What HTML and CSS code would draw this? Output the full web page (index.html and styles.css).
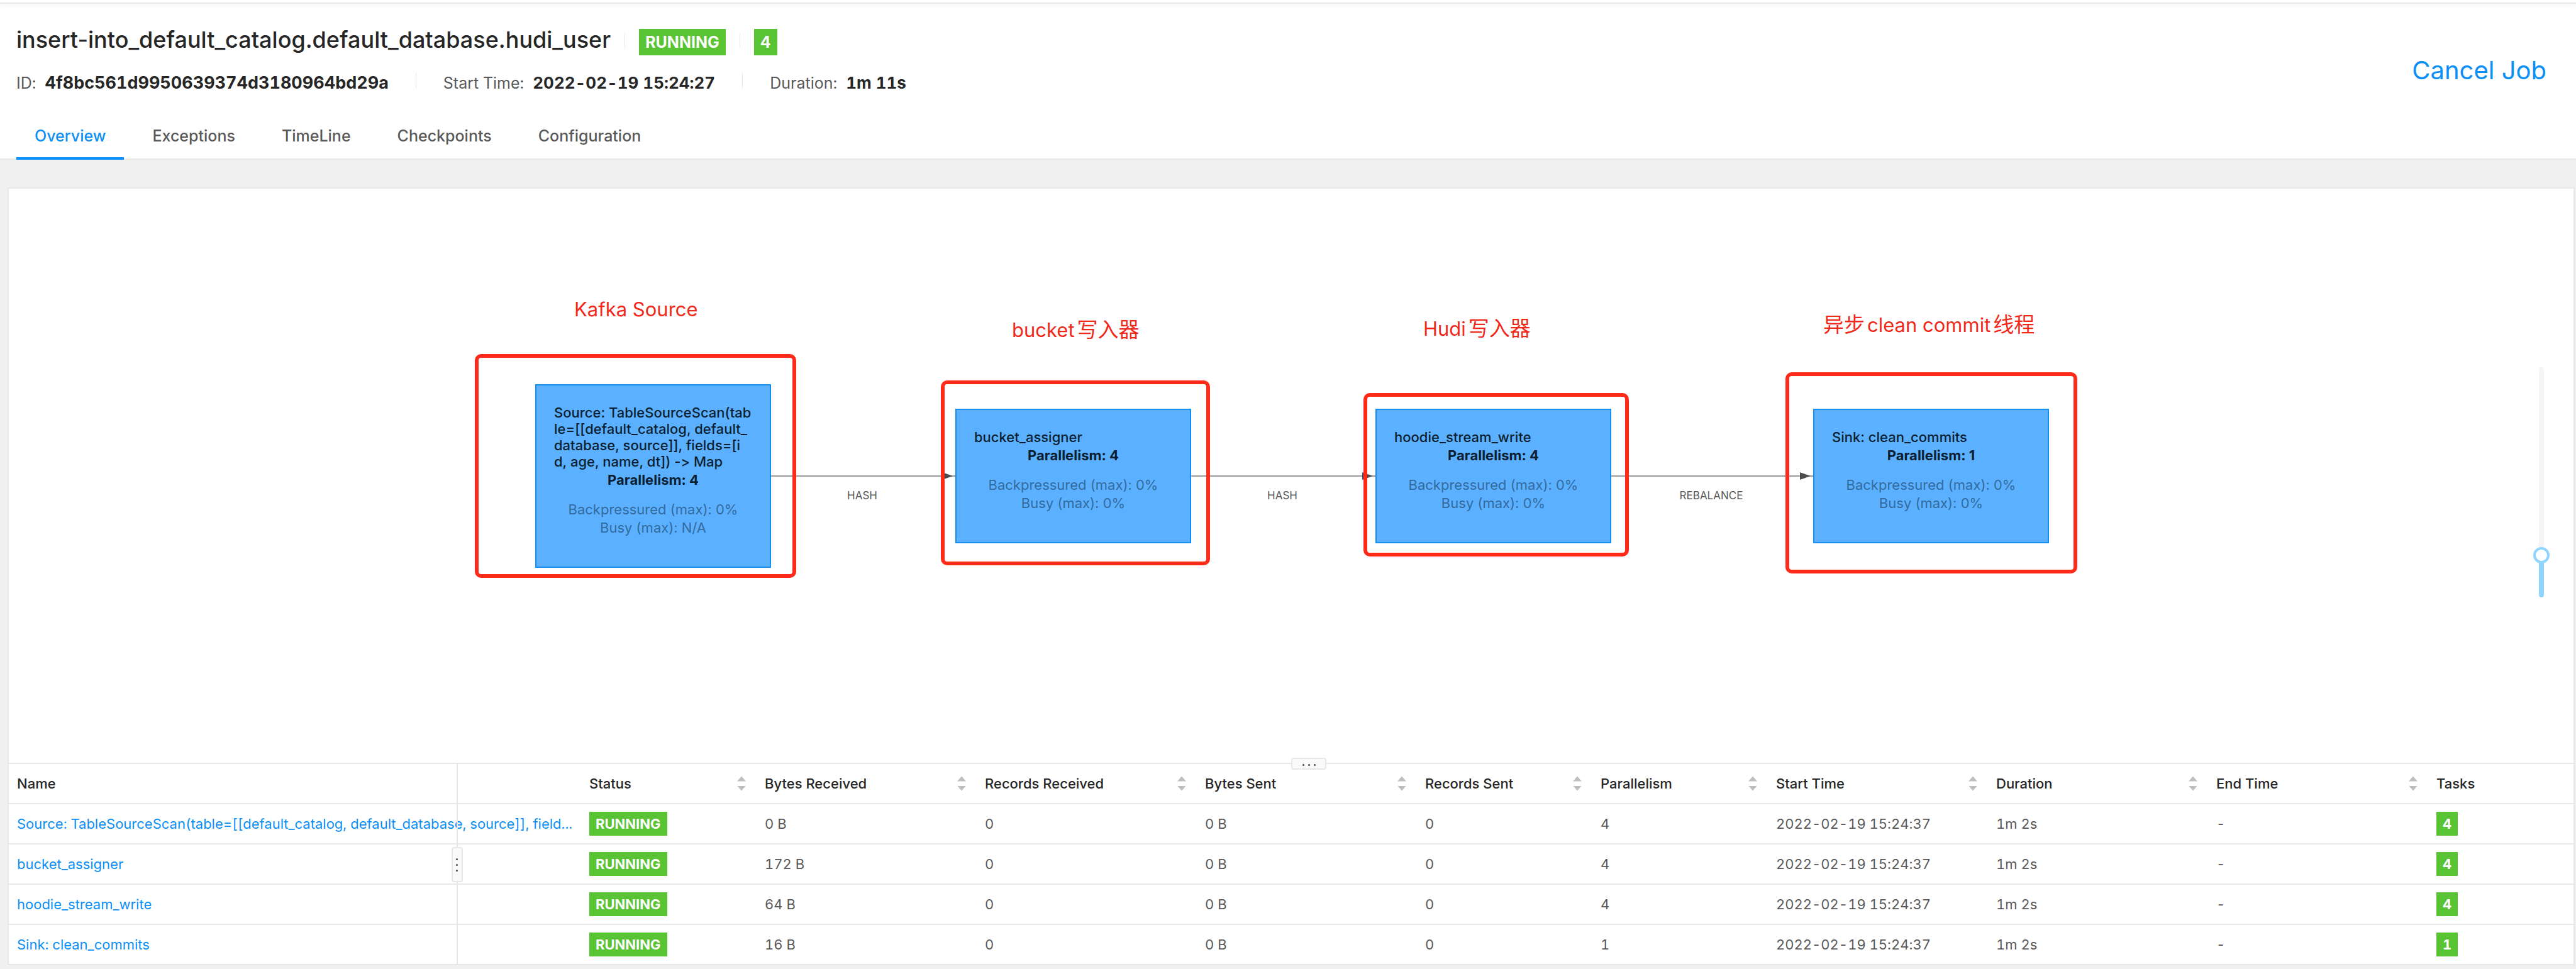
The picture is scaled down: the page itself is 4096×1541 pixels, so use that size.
FILE: index.html
```html
<!DOCTYPE html>
<html lang="en">
<head>
<meta charset="utf-8">
<title>Job overview</title>
<link rel="stylesheet" href="styles.css">
</head>
<body>
<div class="topbar"></div>
<header class="job">
  <div class="job-main">
    <div class="job-row">
      <h1 class="job-title">insert-into_default_catalog.default_database.hudi_user</h1>
      <span class="rule"></span>
      <span class="badge badge-lg">RUNNING</span>
      <span class="rule"></span>
      <span class="badge badge-lg">4</span>
    </div>
    <dl class="facts">
      <div class="fact fact-id"><dt>ID:</dt><dd>4f8bc561d9950639374d3180964bd29a</dd></div>
      <div class="fact"><dt>Start Time:</dt><dd>2022-02-19 15:24:27</dd></div>
      <div class="fact"><dt>Duration:</dt><dd>1m 11s</dd></div>
    </dl>
    <nav class="tabs">
      <a class="tab active" href="#overview">Overview</a>
      <a class="tab" href="#exceptions">Exceptions</a>
      <a class="tab" href="#timeline">TimeLine</a>
      <a class="tab" href="#checkpoints">Checkpoints</a>
      <a class="tab" href="#configuration">Configuration</a>
    </nav>
  </div>
  <button class="cancel" type="button">Cancel Job</button>
</header>

<main class="card" id="overview">
  <section class="canvas">
    <div class="graph">
      <svg class="edges" viewBox="0 0 2560 400" aria-hidden="true">
        <g stroke="#999" stroke-width="2">
          <path d="M471 194H764M1139 194H1432M1807 194H2128"/>
        </g>
        <g fill="#4d4d4d">
          <path d="M743 188L760 194L743 200Z"/>
          <path d="M1411 188L1428 194L1411 200Z"/>
          <path d="M2107 188L2124 194L2107 200Z"/>
        </g>
      </svg>
      <span class="edge-label e1">HASH</span>
      <span class="edge-label e2">HASH</span>
      <span class="edge-label e3">REBALANCE</span>

      <article class="node n1">
        <h2>Source: TableSourceScan(tab<br>le=[[default_catalog, default_<br>database, source]], fields=[i<br>d, age, name, dt]) -&gt; Map</h2>
        <p class="par">Parallelism: 4</p>
        <p class="load">Backpressured (max): 0%<br>Busy (max): N/A</p>
      </article>
      <article class="node n2">
        <h2>bucket_assigner</h2>
        <p class="par">Parallelism: 4</p>
        <p class="load">Backpressured (max): 0%<br>Busy (max): 0%</p>
      </article>
      <article class="node n3">
        <h2>hoodie_stream_write</h2>
        <p class="par">Parallelism: 4</p>
        <p class="load">Backpressured (max): 0%<br>Busy (max): 0%</p>
      </article>
      <article class="node n4">
        <h2>Sink: clean_commits</h2>
        <p class="par">Parallelism: 1</p>
        <p class="load">Backpressured (max): 0%<br>Busy (max): 0%</p>
      </article>

      <div class="mark m1"></div>
      <div class="mark m2"></div>
      <div class="mark m3"></div>
      <div class="mark m4"></div>
      <span class="note t1">Kafka Source</span>
      <span class="note t2">bucket<span class="zh" lang="zh">写入器</span></span>
      <span class="note t3">Hudi<span class="zh" lang="zh">写入器</span></span>
      <span class="note t4"><span class="zh" lang="zh">异步</span>clean commit<span class="zh" lang="zh">线程</span></span>
    </div>
    <input class="zoom" type="range" min="0" max="100" value="16" aria-label="Zoom">
    <button class="grip grip-h" type="button" aria-label="Resize panel"><i></i><i></i><i></i></button>
  </section>

  <section class="list">
    <table class="vertices">
      <colgroup>
        <col><col class="c-s"><col class="c-m"><col class="c-m"><col class="c-m"><col class="c-s"><col class="c-s"><col class="c-m"><col class="c-m"><col class="c-m"><col class="c-t">
      </colgroup>
      <thead>
        <tr>
          <th>Name</th>
          <th><div class="head">Status<span class="sort"></span></div></th>
          <th><div class="head">Bytes Received<span class="sort"></span></div></th>
          <th><div class="head">Records Received<span class="sort"></span></div></th>
          <th><div class="head">Bytes Sent<span class="sort"></span></div></th>
          <th><div class="head">Records Sent<span class="sort"></span></div></th>
          <th><div class="head">Parallelism<span class="sort"></span></div></th>
          <th><div class="head">Start Time<span class="sort"></span></div></th>
          <th><div class="head">Duration<span class="sort"></span></div></th>
          <th><div class="head">End Time<span class="sort"></span></div></th>
          <th>Tasks</th>
        </tr>
      </thead>
      <tbody>
        <tr><td><a href="#v1">Source: TableSourceScan(table=[[default_catalog, default_database, source]], field...</a></td><td><span class="badge">RUNNING</span></td><td>0 B</td><td>0</td><td>0 B</td><td>0</td><td>4</td><td>2022-02-19 15:24:37</td><td>1m 2s</td><td>-</td><td><span class="badge">4</span></td></tr>
        <tr><td><a href="#v2">bucket_assigner</a></td><td><span class="badge">RUNNING</span></td><td>172 B</td><td>0</td><td>0 B</td><td>0</td><td>4</td><td>2022-02-19 15:24:37</td><td>1m 2s</td><td>-</td><td><span class="badge">4</span></td></tr>
        <tr><td><a href="#v3">hoodie_stream_write</a></td><td><span class="badge">RUNNING</span></td><td>64 B</td><td>0</td><td>0 B</td><td>0</td><td>4</td><td>2022-02-19 15:24:37</td><td>1m 2s</td><td>-</td><td><span class="badge">4</span></td></tr>
        <tr><td><a href="#v4">Sink: clean_commits</a></td><td><span class="badge">RUNNING</span></td><td>16 B</td><td>0</td><td>0 B</td><td>0</td><td>1</td><td>2022-02-19 15:24:37</td><td>1m 2s</td><td>-</td><td><span class="badge">1</span></td></tr>
      </tbody>
    </table>
    <div class="splitter"><button class="grip grip-v" type="button" aria-label="Resize column"><i></i><i></i><i></i></button></div>
  </section>
</main>
</body>
</html>
```
FILE: styles.css
```css
* { box-sizing: border-box; }

body {
  margin: 0;
  min-height: 100vh;
  display: flex;
  flex-direction: column;
  background: #f0f0f0;
  color: #595959;
  font-family: Inter, "Noto Sans CJK SC", sans-serif;
  font-size: 22px;
  font-feature-settings: "calt" 0;
}

h1, h2, p, dl, dd { margin: 0; }
a { color: #0c8ff5; text-decoration: none; }
button { font-family: inherit; cursor: pointer; }

/* Header */
.topbar {
  position: relative;
  height: 6px;
  background: #fff;
  border-bottom: 2px solid #e8e8e8;
  box-shadow: 0 2px 8px rgba(0, 0, 0, .06);
}
.job {
  display: flex;
  align-items: flex-start;
  justify-content: space-between;
  padding: 36px 47px 0 26px;
  background: #fff;
  border-bottom: 2px solid #e8e8e8;
}
.job-row {
  display: flex;
  align-items: baseline;
}
.job-title {
  color: #262626;
  font-size: 36px;
  line-height: 42px;
  font-weight: 500;
}
.rule {
  align-self: center;
  width: 1px;
  height: 24px;
  margin: 0 22px;
  background: #e8e8e8;
}
.badge {
  display: inline-block;
  padding: 0 10px;
  background: #58c333;
  color: #fff;
  font-size: 22px;
  line-height: 38px;
  font-weight: 700;
}
.badge-lg {
  font-size: 25px;
  line-height: 42px;
}
.facts {
  display: flex;
  margin-top: 28px;
  font-size: 25px;
  line-height: 32px;
  font-variant-numeric: tabular-nums;
}
.fact { display: flex; gap: 14px; }
.fact + .fact {
  margin-left: 43px;
  padding-left: 44px;
  background: linear-gradient(#e8e8e8, #e8e8e8) 0 0 / 1px 24px no-repeat;
}
.fact dd { color: #262626; font-size: 26px; font-weight: 700; }
.fact-id dd { font-size: 27px; }
.tabs {
  display: flex;
  gap: 16px;
  margin: 30px 0 -2px;
}
.tab {
  padding: 22px 29px 18px;
  border-bottom: 4px solid transparent;
  color: #595959;
  font-size: 25px;
  line-height: 32px;
  font-weight: 500;
}
.tab.active { color: #0c8ff5; border-color: #0a91ff; }
.cancel {
  margin-top: 44px;
  padding: 0;
  border: 0;
  background: none;
  color: #0c8ff5;
  font-size: 40px;
  line-height: 52px;
}

/* Card */
.card {
  flex: 1;
  display: flex;
  flex-direction: column;
  margin: 44px 2px 6px 12px;
  background: #fff;
  border: 2px solid #e8e8e8;
}
.canvas {
  position: relative;
  flex: 1;
  display: flex;
  justify-content: center;
}
.graph {
  position: relative;
  width: 2560px;
  margin: 263px 36px 0 0;
  height: 400px;
}
.edges {
  position: absolute;
  inset: 0;
  width: 100%;
  height: 100%;
}
.edge-label {
  position: absolute;
  top: 213px;
  width: 160px;
  text-align: center;
  color: #595959;
  font-size: 17px;
  line-height: 24px;
}
.e1 { left: 536px; }
.e2 { left: 1204px; }
.e3 { left: 1886px; }
.node {
  position: absolute;
  width: 375px;
  padding: 30px 28px 47px;
  background: #5bb1ff;
  border: 2px solid #128ff0;
  color: #0b1f30;
  font-size: 22px;
  line-height: 29px;
  text-align: center;
}
.node h2 {
  font-size: inherit;
  line-height: 26px;
  font-weight: 500;
  text-align: left;
  white-space: nowrap;
}
.par { margin-top: 2px; font-weight: 700; }
.load { margin-top: 18px; color: #336b9f; }
.n1 { left: 96px; top: 48px; }
.n2 { left: 764px; top: 87px; }
.n3 { left: 1432px; top: 87px; }
.n4 { left: 2128px; top: 87px; }

/* Hand-drawn annotations */
.mark {
  position: absolute;
  border: 6px solid #ff2a1a;
  border-radius: 10px;
}
.m1 { left: 0; top: 0; width: 511px; height: 356px; }
.m2 { left: 741px; top: 42px; width: 428px; height: 294px; }
.m3 { left: 1413px; top: 62px; width: 422px; height: 260px; }
.m4 { left: 2084px; top: 29px; width: 464px; height: 320px; }
.note {
  position: absolute;
  color: #f0291b;
  font-size: 31px;
  line-height: 40px;
  white-space: nowrap;
}
.zh { margin: 0 4px; font-size: 33px; }
.zh:first-child:not(:last-child) { margin-left: 0; }
.t1 { left: 158px; top: -91px; }
.t2 { left: 854px; top: -59px; }
.t3 { left: 1508px; top: -61px; }
.t4 { left: 2144px; top: -67px; }

/* Zoom slider */
.zoom {
  position: absolute;
  top: 284px;
  right: 38px;
  width: 26px;
  height: 366px;
  margin: 0;
  appearance: none;
  background: none;
  writing-mode: vertical-lr;
  direction: rtl;
}
.zoom::-webkit-slider-runnable-track {
  width: 8px;
  height: 366px;
  border-radius: 4px;
  background: linear-gradient(to top, #91d5ff 64px, #f5f5f5 64px);
}
.zoom::-webkit-slider-thumb {
  appearance: none;
  width: 26px;
  height: 26px;
  margin-left: -9px;
  border: 4px solid #91d5ff;
  border-radius: 50%;
  background: #fff;
}

/* Resize grips */
.grip {
  position: absolute;
  display: flex;
  align-items: center;
  justify-content: center;
  gap: 6px;
  padding: 0;
  background: #fafafa;
  border: 2px solid #e8e8e8;
  border-radius: 4px;
}
.grip i {
  width: 3px;
  height: 3px;
  border-radius: 50%;
  background: #404040;
}
.grip-h {
  z-index: 1;
  left: 50%;
  bottom: -11px;
  width: 56px;
  height: 19px;
  padding-top: 3px;
}
.grip-v {
  top: 132px;
  left: -8px;
  width: 18px;
  height: 56px;
  padding-right: 2px;
  flex-direction: column;
}

/* Vertices table */
.list {
  position: relative;
  border-top: 2px solid #e8e8e8;
}
.splitter {
  position: absolute;
  top: 0;
  bottom: 0;
  left: 712px;
  width: 2px;
  background: #e8e8e8;
}
.vertices {
  width: 100%;
  table-layout: fixed;
  border-collapse: separate;
  border-spacing: 0;
  line-height: 38px;
  font-variant-numeric: tabular-nums;
}
.c-s { width: 279px; }
.c-m { width: 350px; }
.c-t { width: 233px; }
.vertices th,
.vertices td {
  height: 64px;
  padding: 0 15px;
  border-bottom: 2px solid #e8e8e8;
  text-align: left;
  white-space: nowrap;
}
.vertices th:first-child,
.vertices td:first-child { padding: 0 10px 0 13px; }
.vertices tbody tr:last-child td { border-bottom: 0; height: 62px; }
.vertices th { color: #262626; font-weight: 500; }
.head {
  display: flex;
  align-items: center;
  justify-content: space-between;
}
.sort {
  display: grid;
  gap: 7px;
}
.sort::before,
.sort::after {
  content: "";
  width: 14px;
  height: 8px;
  background: #bfbfbf;
  clip-path: polygon(50% 0, 100% 100%, 0 100%);
}
.sort::after { clip-path: polygon(0 0, 100% 0, 50% 100%); }
```
